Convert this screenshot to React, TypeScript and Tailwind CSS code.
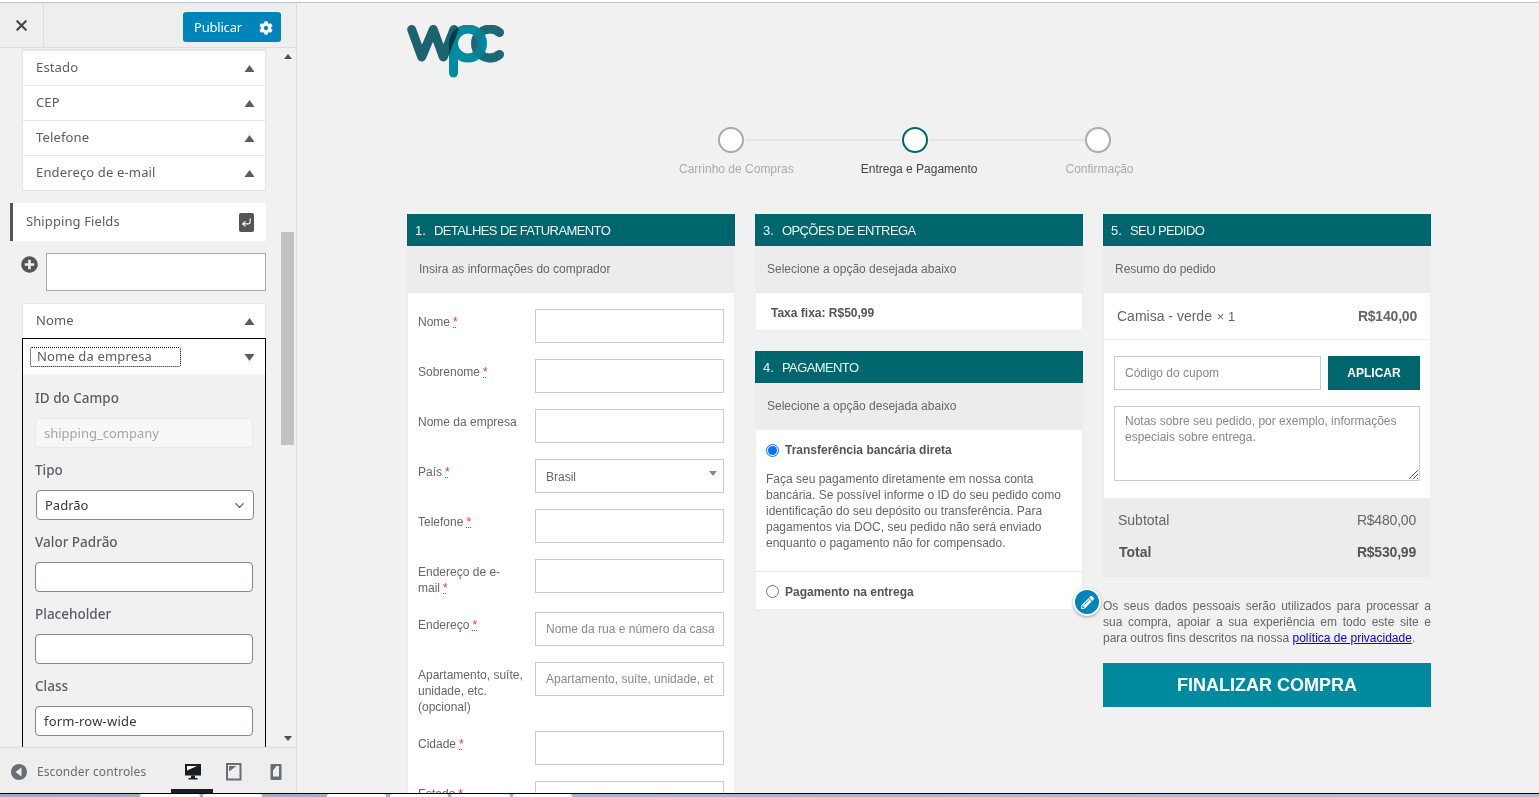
import React from "react";
import { FaCog, FaPencilAlt, FaPlusCircle } from "react-icons/fa";
import { CornerDownLeft, ChevronDown, X } from "lucide-react";

const Tri = ({ down = false }: { down?: boolean }) => (
  <svg width="11" height="8" viewBox="0 0 11 8" className="text-[#555d66]">
    <path d={down ? "M0.500 1h10L5.500 8z" : "M0.500 8h10L5.500 1z"} fill="currentColor" />
  </svg>
);

const SideRow = ({ label }: { label: string }) => (
  <div className="flex h-[35px] items-center justify-between border-b border-[#e5e5e5] bg-white pl-[13px] pr-[10px] text-[13px] tracking-[0.15px] text-[#555d66]">
    <span>{label}</span>
    <Tri />
  </div>
);

const FieldLabel = ({ children, top = "mt-[13px]" }: { children: React.ReactNode; top?: string }) => (
  <div className={`${top} mb-[11px] h-[18px] pl-[12px] text-[13.5px] font-medium leading-[18px] text-[#555d66]`}>{children}</div>
);

const SideInput = ({ value = "" }: { value?: string }) => (
  <div className="mx-[12px] flex h-[30px] w-[218px] items-center rounded-[4px] border border-[#7e8993] bg-white px-[8px] pt-px text-[13px] tracking-[0.2px] text-[#32373c]">
    {value}
  </div>
);

const DesktopIcon = () => (
  <svg width="18" height="18" viewBox="0 0 18 18">
    <path d="M1 1h16v11.500H1z" fill="#191e23" />
    <path d="M3 3h10L3 7.500z" fill="#fff" />
    <path d="M7 12.500h4V15h2.500v1.500h-9V15H7z" fill="#191e23" />
  </svg>
);

const TabletIcon = () => (
  <svg width="16" height="18" viewBox="0 0 16 18">
    <path d="M1 1h13.500v15.500H1z" fill="none" stroke="#666d74" strokeWidth="2" />
    <path d="M3 3h7.500L3 8.500z" fill="#666d74" />
  </svg>
);

const PhoneIcon = () => (
  <svg width="12" height="18" viewBox="0 0 12 18">
    <path d="M1.500 1h9a1 1 0 0 1 1 1v14a1 1 0 0 1-1 1h-9a1 1 0 0 1-1-1V2a1 1 0 0 1 1-1z" fill="#666d74" />
    <path d="M3 3h6v10.500H3z" fill="#eee" />
    <path d="M3 3h3.500L3 7.500z" fill="#666d74" />
  </svg>
);

const Logo = () => (
  <svg width="98" height="54" viewBox="0 0 98 54" className="block">
    <g fill="none" strokeLinecap="round" strokeLinejoin="round" strokeWidth="9">
      <path d="M92.500 7.500A14.500 14.500 0 1 0 92.500 29.500" stroke="#1d6975" />
      <circle cx="61" cy="18.500" r="14.500" stroke="#008b9f" />
      <path d="M46.500 48V18" stroke="#008b9f" />
      <path d="M92.500 7.500A14.500 14.500 0 1 0 92.500 29.500" stroke="#1d6975" opacity="0.35" />
      <path d="M4.700 4.500 14.700 32 26.300 4.500 36.300 32 47 4.500" stroke="#1d6975" style={{ mixBlendMode: "multiply" }} />
    </g>
  </svg>
);

const PanelHead = ({ num, title, sub }: { num: string; title: string; sub: string }) => (
  <>
    <div className="flex h-[32px] items-center bg-[#00666e] pl-[8px] pt-px text-[13px] text-[#e8f5f5]">
      <span className="w-[19px]">{num}</span>
      <span className="tracking-[-0.6px]">{title}</span>
    </div>
    <div className="flex h-[47px] items-center bg-[#ececec] pb-[2px] pl-[12px] text-[12px] text-[#666]">{sub}</div>
  </>
);

const Req = () => <abbr className="ml-[3px] text-[#e33] underline decoration-dotted">*</abbr>;

const FormRow = ({
  label,
  req = true,
  placeholder,
  select,
}: {
  label: string;
  req?: boolean;
  placeholder?: string;
  select?: string;
}) => (
  <div className="mb-[16px] flex items-start">
    <div className="w-[127px] pl-[10px] pr-[8px] pt-[5px] text-[12px] leading-[16px] text-[#666]">
      {label}
      {req && <Req />}
    </div>
    {select ? (
      <div className="flex h-[34px] w-[189px] items-center justify-between border border-[#ccc] bg-white pl-[10px] pr-[6px] pt-[2px] text-[12px] text-[#666]">
        <span>{select}</span>
        <svg width="8" height="5" viewBox="0 0 8 5" className="-mt-[7px]">
          <path d="M0 0h8L4 5z" fill="#888" />
        </svg>
      </div>
    ) : (
      <div className="flex h-[34px] w-[189px] items-center border border-[#ccc] bg-white pl-[10px] pr-[9px] text-[12px]">
        <span className="overflow-hidden whitespace-nowrap text-[#888]">{placeholder}</span>
      </div>
    )}
  </div>
);

const Step = ({ active = false }: { active?: boolean }) => (
  <div className={`h-[26px] w-[26px] shrink-0 rounded-full border-[2px] bg-white ${active ? "border-[#00666e]" : "border-[#aaa]"}`} />
);

const App = () => {
  return (
    <div className="flex h-[797px] w-[1539px] flex-col overflow-hidden bg-[#f1f1f1] font-['Liberation_Sans',sans-serif]">
      <div className="h-[3px] shrink-0 border-b border-[#b5c7d9] bg-white" />
      <div className="flex min-h-0 flex-1">
        {/* customizer sidebar */}
        <aside className="flex w-[297px] shrink-0 flex-col border-r border-[#ddd] bg-[#eee] font-['Noto_Sans',sans-serif]">
          <div className="flex h-[45px] shrink-0 items-start border-b border-[#ddd]">
            <div className="flex h-full w-[44px] items-center justify-center border-r border-[#ddd] text-[#444]">
              <X size={17} strokeWidth={3} />
            </div>
            <div className="ml-[139px] mt-[9px] flex h-[30px] w-[98px] items-center rounded-[3px] bg-[#0085ba] pl-[11px] pt-px text-[13px] tracking-[-0.2px] text-white">
              <span>Publicar</span>
              <FaCog size={14} className="ml-[17px]" />
            </div>
          </div>
          <div className="flex min-h-0 flex-1">
            <div className="min-w-0 w-[281px] overflow-hidden bg-[#f1f1f1] pl-[10px]">
              <div className="ml-[12px] mt-px w-[244px] border border-t-2 border-[#e5e5e5] border-b-0">
                <SideRow label="Estado" />
                <SideRow label="CEP" />
                <SideRow label="Telefone" />
                <SideRow label="Endereço de e-mail" />
              </div>
              <div className="mt-[12px] flex h-[38px] w-[256px] items-center justify-between border-l-[3px] border-[#555] bg-white pl-[13px] pr-[12px] text-[13px] tracking-[0.1px] text-[#555d66]">
                <span>Shipping Fields</span>
                <span className="flex h-[19px] w-[15px] items-center justify-center rounded-[2px] bg-[#555]">
                  <CornerDownLeft size={11} strokeWidth={2.5} className="text-white" />
                </span>
              </div>
              <div className="mt-[12px] flex w-[256px] items-start">
                <FaPlusCircle size={17} className="ml-[11px] mt-[3px] text-[#555]" />
                <div className="ml-[8px] h-[38px] w-[220px] border border-[#aaa] bg-white" />
              </div>
              <div className="ml-[12px] mt-[12px] w-[244px] border-x border-t border-[#e5e5e5]">
                <div className="flex h-[34px] items-center justify-between bg-white pl-[13px] pr-[10px] text-[13px] tracking-[0.15px] text-[#555d66]">
                  <span>Nome</span>
                  <Tri />
                </div>
              </div>
              <div className="ml-[12px] h-[420px] w-[244px] border border-black">
                <div className="flex h-[35px] items-center justify-between bg-white pl-[7px] pr-[10px]">
                  <span className="flex h-[20px] w-[151px] items-center rounded-[2px] border border-dotted border-black pl-[6px] text-[13px] tracking-[0.15px] text-[#555d66]">
                    Nome da empresa
                  </span>
                  <Tri down />
                </div>
                <FieldLabel top="mt-[15px]">ID do Campo</FieldLabel>
                <div className="mx-[12px] flex h-[30px] w-[218px] items-center rounded-[4px] border border-[#e8e8e8] bg-[#f7f7f7] px-[8px] pt-px text-[13px] text-[#a0a5aa]">
                  shipping_company
                </div>
                <FieldLabel>Tipo</FieldLabel>
                <div className="ml-[13px] flex h-[30px] w-[218px] items-center justify-between rounded-[4px] border border-[#7e8993] bg-white pl-[8px] pr-[6px] pt-px text-[13px] text-[#32373c]">
                  <span>Padrão</span>
                  <ChevronDown size={15} className="text-[#555]" />
                </div>
                <FieldLabel>Valor Padrão</FieldLabel>
                <SideInput />
                <FieldLabel>Placeholder</FieldLabel>
                <SideInput />
                <FieldLabel>Class</FieldLabel>
                <SideInput value="form-row-wide" />
              </div>
            </div>
            <div className="flex w-[15px] shrink-0 flex-col items-center bg-[#f1f1f1] pr-[2px]">
              <svg width="8" height="5" viewBox="0 0 8 5" className="mt-[6px]">
                <path d="M0 5h8L4 0z" fill="#505050" />
              </svg>
              <div className="mt-[173px] h-[213px] w-[13px] bg-[#c1c1c1]" />
              <svg width="8" height="5" viewBox="0 0 8 5" className="mt-[291px]">
                <path d="M0 0h8L4 5z" fill="#505050" />
              </svg>
            </div>
          </div>
          <div className="relative flex h-[46px] shrink-0 items-center border-t border-[#ddd] pt-[2px] text-[12px] tracking-[0.1px]">
            <svg width="16" height="16" viewBox="0 0 16 16" className="ml-[11px]">
              <circle cx="8" cy="8" r="8" fill="#666d74" />
              <path d="M10.500 3.500v9L4.500 8z" fill="#eee" />
            </svg>
            <span className="ml-[10px] w-[147px] text-[#666d74]">Esconder controles</span>
            <DesktopIcon />
            <span className="ml-[24px]">
              <TabletIcon />
            </span>
            <span className="ml-[28px]">
              <PhoneIcon />
            </span>
            <div className="absolute bottom-0 left-[171px] h-[4px] w-[42px] bg-[#191e23]" />
          </div>
        </aside>

        {/* store preview */}
        <main className="relative min-w-0 flex-1 overflow-hidden pl-[110px]">
          <div className="pt-[22px]">
            <Logo />
          </div>
          <div className="ml-[311px] mt-[48px] flex w-[393px] items-center">
            <Step />
            <div className="mx-px h-[2px] flex-1 bg-[#e3e3e3]" />
            <Step active />
            <div className="mx-px h-[2px] flex-1 bg-[#e3e3e3]" />
            <Step />
          </div>
          <div className="mt-[8px] flex h-[16px] text-[12px] leading-[16px] text-[#aaa]">
            <span className="ml-[272px]">Carrinho de Compras</span>
            <span className="ml-[67px] text-[#444]">Entrega e Pagamento</span>
            <span className="ml-[88px]">Confirmação</span>
          </div>

          <div className="mt-[37px] flex items-start gap-[20px]">
            <section className="w-[328px]">
              <PanelHead num="1." title="DETALHES DE FATURAMENTO" sub="Insira as informações do comprador" />
              <div className="border-x border-[#ececec] bg-white pt-[16px]">
                <FormRow label="Nome" />
                <FormRow label="Sobrenome" />
                <FormRow label="Nome da empresa" req={false} />
                <FormRow label="País" select="Brasil" />
                <FormRow label="Telefone" />
                <FormRow label="Endereço de e-mail" />
                <FormRow label="Endereço" placeholder="Nome da rua e número da casa" />
                <FormRow label="Apartamento, suíte, unidade, etc. (opcional)" req={false} placeholder="Apartamento, suíte, unidade, etc. (opcional)" />
                <FormRow label="Cidade" />
                <FormRow label="Estado" />
              </div>
            </section>

            <div className="w-[328px]">
              <section>
                <PanelHead num="3." title="OPÇÕES DE ENTREGA" sub="Selecione a opção desejada abaixo" />
                <div className="flex h-[38px] items-center border-x border-b border-[#ececec] bg-white pl-[15px] pt-[2px] text-[12px] font-bold text-[#555]">
                  Taxa fixa: R$50,99
                </div>
              </section>
              <section className="mt-[20px]">
                <PanelHead num="4." title="PAGAMENTO" sub="Selecione a opção desejada abaixo" />
                <div className="border-x border-b border-[#ececec] bg-white text-[12px] text-[#666]">
                  <div className="flex items-center pl-[10px] pt-[12px]">
                    <span className="flex h-[13px] w-[13px] items-center justify-center rounded-full border border-[#0075ff]">
                      <span className="h-[9px] w-[9px] rounded-full bg-[#0075ff]" />
                    </span>
                    <span className="ml-[6px] font-bold leading-[16px] text-[#555]">Transferência bancária direta</span>
                  </div>
                  <p className="mx-[10px] mt-[13px] h-[100px] leading-[16px]">
                    Faça seu pagamento diretamente em nossa conta bancária. Se possível informe o ID do seu pedido como identificação do seu depósito ou transferência. Para pagamentos via DOC, seu pedido não será enviado enquanto o pagamento não for compensado.
                  </p>
                  <div className="flex h-[38px] items-center border-t border-[#e8e8e8] pl-[10px] pt-[2px]">
                    <span className="h-[13px] w-[13px] rounded-full border border-[#767676] bg-white" />
                    <span className="ml-[6px] font-bold text-[#555]">Pagamento na entrega</span>
                  </div>
                </div>
              </section>
            </div>

            <section className="relative w-[328px]">
              <PanelHead num="5." title="SEU PEDIDO" sub="Resumo do pedido" />
              <div className="border-x border-[#ececec] bg-white">
                <div className="flex h-[47px] items-center justify-between border-b border-[#eee] pl-[13px] pr-[13px] text-[14px] text-[#666]">
                  <span>
                    Camisa - verde <span className="ml-px text-[13px]">× 1</span>
                  </span>
                  <span className="font-bold tracking-[-0.2px]">R$140,00</span>
                </div>
                <div className="mt-[16px] flex pl-[10px]">
                  <div className="flex h-[34px] w-[207px] items-center border border-[#ccc] pl-[10px] text-[12px] text-[#888]">Código do cupom</div>
                  <div className="ml-[7px] flex h-[34px] w-[92px] items-center justify-center bg-[#00666e] text-[12px] font-bold text-white">APLICAR</div>
                </div>
                <div className="relative ml-[10px] mt-[16px] h-[75px] w-[306px] border border-[#ccc] px-[10px] pt-[6px] text-[12px] leading-[16px] text-[#888]">
                  Notas sobre seu pedido, por exemplo, informações especiais sobre entrega.
                  <svg width="9" height="9" viewBox="0 0 9 9" className="absolute bottom-px right-px">
                    <path d="M0 9 9 0M4 9l5-5M8 9l1-1" stroke="#555" strokeWidth="1" fill="none" />
                  </svg>
                </div>
                <div className="h-[17px]" />
              </div>
              <div className="h-[79px] bg-[#ececec] pl-[15px] pr-[15px] pt-[14px] text-[14px] text-[#666]">
                <div className="flex h-[16px] items-center justify-between leading-[16px]">
                  <span>Subtotal</span>
                  <span className="tracking-[-0.2px]">R$480,00</span>
                </div>
                <div className="mt-[16px] flex h-[16px] items-center justify-between pl-px font-bold leading-[16px] text-[#555]">
                  <span>Total</span>
                  <span className="tracking-[-0.2px]">R$530,99</span>
                </div>
              </div>
              <p className="mt-[21px] text-justify text-[12px] leading-[16px] text-[#666]">
                Os seus dados pessoais serão utilizados para processar a sua compra, apoiar a sua experiência em todo este site e para outros fins descritos na nossa{" "}
                <a className="text-[#0000ee] underline">política de privacidade</a>.
              </p>
              <div className="mt-[17px] flex h-[44px] items-center justify-center bg-[#008a9e] text-[18px] font-bold text-white">FINALIZAR COMPRA</div>
              <div className="absolute -left-[30px] top-[374px] flex h-[28px] w-[28px] items-center justify-center rounded-full border-2 border-white bg-[#0085ba] shadow-[0_1px_3px_rgba(0,0,0,0.35)]">
                <FaPencilAlt size={13} className="text-white" />
              </div>
            </section>
          </div>
        </main>
      </div>

      {/* taskbar sliver */}
      <div className="flex h-[4px] shrink-0 border-t border-black bg-gradient-to-r from-[#8fb0cf] to-[#a8c4de]">
        <div className="ml-[140px] h-full w-[60px] rounded-t-[2px] bg-white" />
        <div className="ml-[3px] h-full w-[59px] rounded-t-[2px] bg-white" />
        <div className="ml-[65px] h-full w-[59px] rounded-t-[2px] bg-white" />
        <div className="ml-[4px] h-full w-[58px] rounded-t-[2px] bg-white" />
        <div className="ml-[3px] h-full w-[59px] rounded-t-[2px] bg-white" />
        <div className="ml-[3px] h-full w-[59px] rounded-t-[2px] bg-white" />
      </div>
    </div>
  );
};

export default App;
